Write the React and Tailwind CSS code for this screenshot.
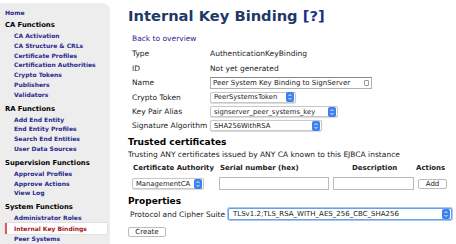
const sections = [
  {
    title: "CA Functions",
    items: [
      "CA Activation",
      "CA Structure & CRLs",
      "Certificate Profiles",
      "Certification Authorities",
      "Crypto Tokens",
      "Publishers",
      "Validators",
    ],
  },
  {
    title: "RA Functions",
    items: ["Add End Entity", "End Entity Profiles", "Search End Entities", "User Data Sources"],
  },
  {
    title: "Supervision Functions",
    items: ["Approval Profiles", "Approve Actions", "View Log"],
  },
  {
    title: "System Functions",
    items: ["Administrator Roles", "Internal Key Bindings", "Peer Systems"],
  },
];

const Stepper = () => (
  <span className="ml-auto flex h-[10px] w-[8px] shrink-0 items-center justify-center rounded-[2px] bg-[#3b82f0]">
    <svg width="6" height="8" viewBox="0 0 6 8">
      <path d="M1.5 3 L3 1.5 L4.5 3 M1.5 5 L3 6.5 L4.5 5" stroke="white" strokeWidth="0.9" fill="none" />
    </svg>
  </span>
);

const Select = ({ value, className = "" }) => (
  <div
    className={`flex h-[11px] items-center gap-[2px] rounded-[2px] border border-[#c8c8c8] bg-white pl-[3px] pr-[1px] text-[6.8px] shadow-[0_0.5px_1px_rgba(0,0,0,0.15)] ${className}`}
  >
    <span className="whitespace-nowrap">{value}</span>
    <Stepper />
  </div>
);

const Sidebar = () => (
  <div className="mt-[3px] w-[110px] shrink-0 rounded-tr-[8px] bg-[#ededed] pl-[5px] pt-[5px] text-[6px] font-bold">
    <div className="leading-[10px] text-[#2a2a8c]">Home</div>
    {sections.map((s, i) => (
      <div key={s.title} className={i === 0 ? "mt-[1px]" : "mt-[3px]"}>
        <div className="text-[6.8px] leading-[12px] text-black">{s.title}</div>
        {s.items.map((it) =>
          it === "Internal Key Bindings" ? (
            <div
              key={it}
              className="relative flex h-[11px] w-[102px] items-center bg-white pl-[9px] text-[#a31818] shadow-[0_0_1px_rgba(0,0,0,0.3)]"
            >
              <span className="absolute left-0 top-0 h-[11px] w-[2px] bg-[#e05a5a]" />
              {it}
            </div>
          ) : (
            <div key={it} className="pl-[9px] leading-[9.8px] text-[#2a2a8c]">
              {it}
            </div>
          )
        )}
      </div>
    ))}
  </div>
);

const Row = ({ label, children }) => (
  <div className="flex items-center">
    <div className="w-[78px] shrink-0">{label}</div>
    {children}
  </div>
);

export default function App() {
  return (
    <div
      className="flex h-[244px] w-[456px] overflow-hidden bg-white text-[7.5px] text-[#222]"
      style={{ fontFamily: '"DejaVu Sans", Verdana, sans-serif' }}
    >
      <Sidebar />
      <div className="flex-1 pl-[18px] pt-[7px]">
        <h1 className="text-[14.7px] font-bold leading-[18px] text-[#1f3a68]">
          Internal Key Binding <span className="text-[#1c2f88]">[?]</span>
        </h1>
        <div className="mt-[8px] pl-[4px] text-[#2a2a8c]">Back to overview</div>
        <div className="mt-[4px] flex flex-col gap-[3px] pl-[4px]">
          <Row label="Type">AuthenticationKeyBinding</Row>
          <Row label="ID">Not yet generated</Row>
          <Row label="Name">
            <div className="flex h-[12px] w-[162px] items-center border border-[#b0b0b0] border-t-[#888] bg-white pl-[2px] pr-[2px] text-[7px]">
              <span className="whitespace-nowrap">Peer System Key Binding to SignServer</span>
              <span className="ml-auto h-[6px] w-[5px] shrink-0 rounded-[1px] border border-[#999]" />
            </div>
          </Row>
          <Row label="Crypto Token">
            <Select value="PeerSystemsToken" className="w-[86px]" />
          </Row>
          <Row label="Key Pair Alias">
            <Select value="signserver_peer_systems_key" className="w-[128px]" />
          </Row>
          <Row label="Signature Algorithm">
            <Select value="SHA256WithRSA" className="w-[112px]" />
          </Row>
        </div>
        <div className="mt-[5px] text-[9px] font-bold leading-[11px] text-black">Trusted certificates</div>
        <div className="mt-[1px]">Trusting ANY certificates issued by ANY CA known to this EJBCA instance</div>
        <div className="mt-[3px] flex text-[7px] font-bold">
          <div className="w-[90px] pl-[5px]">Certificate Authority</div>
          <div className="w-[130px] pl-[2px]">Serial number (hex)</div>
          <div className="w-[68px] pl-[4px]">Description</div>
          <div>Actions</div>
        </div>
        <div className="mt-[4px] flex items-center">
          <Select value="ManagementCA" className="ml-[4px] w-[72px]" />
          <div className="ml-[15px] h-[13px] w-[110px] border border-[#bbb] bg-white" />
          <div className="ml-[4px] h-[13px] w-[81px] border border-[#bbb] bg-white" />
          <div className="ml-[4px] flex h-[10px] w-[29px] items-center justify-center rounded-[2px] border border-[#bbb] bg-white text-[7px]">
            Add
          </div>
        </div>
        <div className="mt-[6px] text-[9px] font-bold leading-[11px] text-black">Properties</div>
        <div className="mt-[1px] flex items-center pl-[2px]">
          <div className="w-[98px]">Protocol and Cipher Suite</div>
          <div className="flex h-[12px] w-[224px] items-center rounded-[2px] border border-[#6aa0ea] bg-white pl-[4px] pr-[1px] text-[7px] shadow-[0_0_0_1px_#a9c8f3]">
            TLSv1.2;TLS_RSA_WITH_AES_256_CBC_SHA256
            <Stepper />
          </div>
        </div>
        <div className="mt-[7px] flex h-[10px] w-[38px] items-center justify-center rounded-[2px] border border-[#bbb] bg-white text-[7px]">
          Create
        </div>
      </div>
    </div>
  );
}
